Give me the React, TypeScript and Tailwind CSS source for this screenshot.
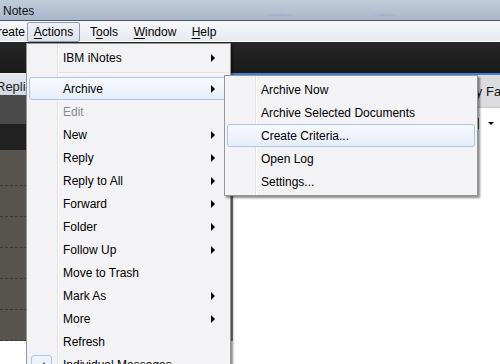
import React from 'react';

type Item = {
    label: string;
    sub?: boolean;
    disabled?: boolean;
    active?: boolean;
    checked?: boolean;
    separator?: boolean;
};

const actionsItems: Item[] = [
    { label: 'IBM iNotes', sub: true },
    { label: '-', separator: true },
    { label: 'Archive', sub: true, active: true },
    { label: 'Edit', disabled: true },
    { label: 'New', sub: true },
    { label: 'Reply', sub: true },
    { label: 'Reply to All', sub: true },
    { label: 'Forward', sub: true },
    { label: 'Folder', sub: true },
    { label: 'Follow Up', sub: true },
    { label: 'Move to Trash' },
    { label: 'Mark As', sub: true },
    { label: 'More', sub: true },
    { label: 'Refresh' },
    { label: 'Individual Messages', checked: true },
];

const archiveItems: Item[] = [
    { label: 'Archive Now' },
    { label: 'Archive Selected Documents' },
    { label: 'Create Criteria...', active: true },
    { label: 'Open Log' },
    { label: 'Settings...' },
];

function Arrow() {
    return <span className="absolute right-[12px] top-1/2 -translate-y-1/2 w-0 h-0 border-y-[4px] border-y-transparent border-l-[4px] border-l-black" />;
}

function MenuRow({ item }: { item: Item }) {
    if (item.separator) {
        return (
            <div className="h-[8px] flex flex-col justify-center pl-[31px] pr-[2px]">
                <div className="h-px bg-[#e0e0e0]" />
                <div className="h-px bg-white" />
            </div>
        );
    }
    return (
        <div
            className={
                'relative h-[23px] mx-[2px] flex items-center pl-[33px] rounded-[3px] border ' +
                (item.active
                    ? 'border-[#a9c6ec] bg-[linear-gradient(to_bottom,#f7f9fd,#e7eef9)]'
                    : 'border-transparent')
            }
        >
            {item.checked && (
                <span className="absolute left-[1px] top-[1px] w-[21px] h-[21px] rounded-[3px] border border-[#a9c6ec] bg-[#eef3fb] flex items-center justify-center text-[12px] text-[#1a1a1a]">
                    ✓
                </span>
            )}
            <span className={item.disabled ? 'text-[#8d8d8d]' : 'text-black'}>{item.label}</span>
            {item.sub && <Arrow />}
        </div>
    );
}

function Menu({ items, className }: { items: Item[]; className: string }) {
    return (
        <div
            className={
                'absolute border border-[#979797] bg-[#f3f2f5] py-[2px] shadow-[2px_2px_2px_rgba(0,0,0,0.45)] ' + className
            }
        >
            {/* gutter */}
            <div className="absolute top-0 bottom-0 left-[30px] w-px bg-[#e2e3e3]" />
            <div className="absolute top-0 bottom-0 left-[31px] w-px bg-white" />
            <div className="relative">
                {items.map((it, i) => (
                    <MenuRow key={i} item={it} />
                ))}
            </div>
        </div>
    );
}

function MenuBarItem({ label, u, className }: { label: string; u: number; className: string }) {
    return (
        <div className={'h-[20px] flex items-center justify-center ' + className}>
            <span>
                {label.slice(0, u)}
                <span className="underline underline-offset-2">{label[u]}</span>
                {label.slice(u + 1)}
            </span>
        </div>
    );
}

export default function App() {
    return (
        <div className="relative w-[500px] h-[364px] overflow-hidden bg-white text-[12px] font-['Liberation_Sans',Arial,sans-serif]">
            {/* Title bar */}
            <div className="h-[21px] border-b border-[#4a5567] flex items-center pl-[3px] pt-[1px] text-[#111] bg-[radial-gradient(ellipse_at_236px_14px,rgba(205,165,125,0.6),transparent_12px),radial-gradient(ellipse_at_342px_14px,rgba(215,160,105,0.6),transparent_12px),radial-gradient(ellipse_at_447px_14px,rgba(95,150,225,0.7),transparent_12px),radial-gradient(ellipse_at_280px_15px,rgba(110,120,140,0.35),transparent_18px),radial-gradient(ellipse_at_385px_15px,rgba(90,100,120,0.4),transparent_18px),linear-gradient(to_bottom,#c1ccdb,#a9b7ca)]">
                Notes
            </div>

            {/* Menu bar */}
            <div className="h-[21px] flex items-start pt-[1px] bg-[linear-gradient(to_bottom,#f7f8fb,#e6e9f0)] border-b border-white text-black">
                <div className="w-[27px] h-[20px] flex items-center justify-end overflow-hidden">
                    <span className="pr-[2px]">Create</span>
                </div>
                <MenuBarItem
                    label="Actions"
                    u={0}
                    className="w-[53px] rounded-[2px] border border-[#8e9cb2] bg-[linear-gradient(to_bottom,#eef1f7,#dde3ee)]"
                />
                <MenuBarItem label="Tools" u={1} className="w-[44px] ml-[2px]" />
                <MenuBarItem label="Window" u={0} className="w-[58px]" />
                <MenuBarItem label="Help" u={0} className="w-[40px]" />
            </div>

            {/* Dark toolbar */}
            <div className="h-[31px] bg-[linear-gradient(to_bottom,#262626,#1a1a1a)]" />

            {/* Panes */}
            <div className="flex h-[268px]">
                <div className="w-[231px] flex flex-col">
                    <div className="h-[25px] flex items-center pt-[4px] border-t border-[#eef1f6] bg-[linear-gradient(to_bottom,#e2e7f0,#d1d8e5)] text-[#1b1b1b] overflow-hidden">
                        <span className="-ml-[4px] text-[13px] whitespace-nowrap">Replication</span>
                    </div>
                    <div className="h-[33px] bg-[#4a4a4a]" />
                    <div className="h-[30px] bg-[#212121]" />
                    <div className="flex-1 bg-[#57534f] flex flex-col pt-[5px]">
                        {[0, 1, 2, 3, 4, 5].map((i) => (
                            <div key={i} className="h-[31px] shrink-0 border-b border-dashed border-[#3a3633]" />
                        ))}
                    </div>
                </div>
                <div className="flex-1 min-w-0 flex flex-col border-l-2 border-[#8a8a8a]">
                    <div className="h-[2px] bg-[#3b7fd9]" />
                    <div className="h-[33px] leading-[33px] border-b border-[#c8c8c8] bg-[#dcdcdf] overflow-hidden whitespace-nowrap pl-[206px] text-[13px] text-[#111]">
                        Holiday Fair
                    </div>
                    <div className="h-[30px] flex items-center justify-end gap-[9px] pr-[6px] bg-white">
                        <span className="w-[5px] h-[11px] bg-[#555]" />
                        <span className="w-0 h-0 border-x-[3px] border-x-transparent border-t-[3px] border-t-black" />
                    </div>
                    <div className="flex-1 bg-white" />
                </div>
            </div>

            {/* Actions menu */}
            <Menu items={actionsItems} className="left-[26px] top-[43px] w-[205px]" />

            {/* Archive submenu */}
            <Menu items={archiveItems} className="left-[224px] top-[75px] w-[254px]" />
        </div>
    );
}
